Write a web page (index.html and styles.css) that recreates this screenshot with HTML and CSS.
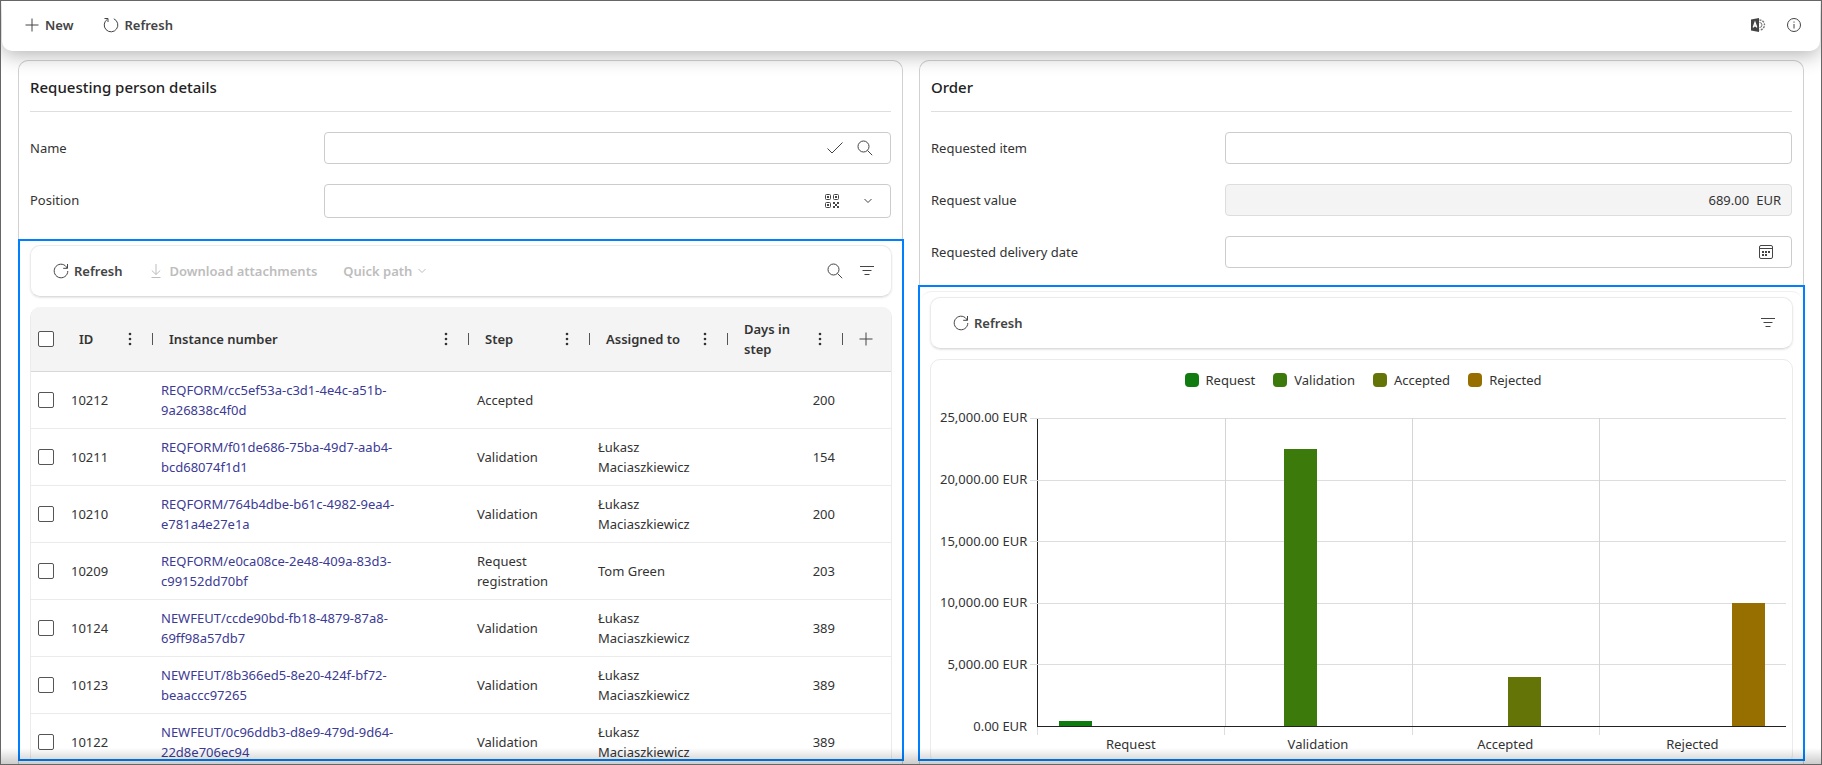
FILE: index.html
```html
<!DOCTYPE html>
<html lang="en">
<head>
    <meta charset="UTF-8">
    <meta name="viewport" content="width=device-width, initial-scale=1.0">
    <title>Request form</title>
    <link rel="stylesheet" href="styles.css">
</head>
<body>
    <svg class="sprite" aria-hidden="true">
        <symbol id="i-plus" viewBox="0 0 16 16"><path d="M8 1.5v13M1.5 8h13"/></symbol>
        <symbol id="i-reload" viewBox="0 0 16 16"><path d="M4.500 2.200A6.800 6.800 0 1 0 10.800 1.800M1.500 1.500h3.500v3.500"/></symbol>
        <symbol id="i-refresh" viewBox="0 0 16 16"><path d="M14.200 5.200A6.800 6.800 0 1 0 14.800 8M14.500 1v4.300h-4.300"/></symbol>
        <symbol id="i-download" viewBox="0 0 16 16"><path d="M8 1v10.500M3.800 7.500L8 11.500l4.200-4M3.500 14.500h9"/></symbol>
        <symbol id="i-chevron" viewBox="0 0 10 10"><path d="M1.500 3L5 6.500 8.500 3"/></symbol>
        <symbol id="i-search" viewBox="0 0 16 16"><circle cx="6.500" cy="6.500" r="5.500"/><path d="M10.500 10.500l4.700 4.700"/></symbol>
        <symbol id="i-filter" viewBox="0 0 16 16"><path d="M1 3.500h14M3.500 7.500h9M5.500 11.500h5"/></symbol>
        <symbol id="i-check" viewBox="0 0 18 16"><path d="M1.500 8.500l4.500 4.500L16.500 2.500"/></symbol>
        <symbol id="i-info" viewBox="0 0 16 16"><circle cx="8" cy="8" r="6.500"/><path d="M8 7v4.500M8 4.500v1.200"/></symbol>
        <symbol id="i-dots" viewBox="0 0 16 16"><g fill="#333" stroke="none"><circle cx="8" cy="3" r="1.300"/><circle cx="8" cy="8" r="1.300"/><circle cx="8" cy="13" r="1.300"/></g></symbol>
        <symbol id="i-calendar" viewBox="0 0 16 16"><rect x="1.500" y="1.500" width="13" height="13" rx="1.500"/><path d="M1.500 4.500h13"/><path stroke-width="2" stroke-dasharray="2 1" d="M4 8h8M4 11h5"/></symbol>
        <symbol id="i-qr" viewBox="0 0 16 16"><rect x="1.500" y="1.500" width="5" height="5" rx="1"/><rect x="9.500" y="1.500" width="5" height="5" rx="1"/><rect x="1.500" y="9.500" width="5" height="5" rx="1"/><path stroke-width="2" d="M3 4h2M11 4h2M3 12h2M9 10h2M13 10h2M11 12h2M9 14h2M13 14h2"/></symbol>
        <symbol id="i-admin" viewBox="0 0 16 16"><path fill="#444" stroke="none" d="M1 2.500L9 1v14l-8-1.500z"/><path stroke="#fff" stroke-width="1.300" d="M3.200 10.500L5 5.500l1.800 5M3.800 9h2.400"/><path stroke="#777" stroke-width="1.400" stroke-dasharray="2 1" d="M9.500 3a5 5 0 0 1 0 10"/><path stroke="#777" d="M9.500 5.500a2.500 2.500 0 0 1 0 5"/></symbol>
    </svg>

    <div class="frame">
        <header class="topbar">
            <button class="tool"><svg class="icon"><use href="#i-plus"/></svg>New</button>
            <button class="tool"><svg class="icon"><use href="#i-reload"/></svg>Refresh</button>
            <span class="spacer"></span>
            <button class="tool" aria-label="Admin tools"><svg class="icon"><use href="#i-admin"/></svg></button>
            <button class="tool" aria-label="Information"><svg class="icon"><use href="#i-info"/></svg></button>
        </header>

        <main class="columns">
            <section class="card">
                <h2>Requesting person details</h2>
                <div class="field">
                    <label for="name">Name</label>
                    <div class="control">
                        <input id="name" type="text">
                        <button aria-label="Verify"><svg class="icon wide"><use href="#i-check"/></svg></button>
                        <button aria-label="Search"><svg class="icon"><use href="#i-search"/></svg></button>
                    </div>
                </div>
                <div class="field">
                    <label for="position">Position</label>
                    <div class="control tall">
                        <input id="position" type="text">
                        <button aria-label="Scan code"><svg class="icon"><use href="#i-qr"/></svg></button>
                        <button class="expand" aria-label="Expand"><svg class="icon small"><use href="#i-chevron"/></svg></button>
                    </div>
                </div>

                <div class="highlight report">
                    <div class="toolbar">
                        <button class="tool"><svg class="icon"><use href="#i-refresh"/></svg>Refresh</button>
                        <button class="tool" disabled><svg class="icon"><use href="#i-download"/></svg>Download attachments</button>
                        <button class="tool" disabled>Quick path<svg class="icon small"><use href="#i-chevron"/></svg></button>
                        <span class="spacer"></span>
                        <button class="tool" aria-label="Search"><svg class="icon"><use href="#i-search"/></svg></button>
                        <button class="tool" aria-label="Filter"><svg class="icon"><use href="#i-filter"/></svg></button>
                    </div>
                    <div class="grid">
                        <table>
                            <colgroup>
                                <col class="c-check"><col class="c-id"><col><col class="c-step"><col class="c-assigned"><col class="c-days"><col class="c-add">
                            </colgroup>
                            <thead>
                                <tr>
                                    <th class="check"><input type="checkbox" aria-label="Select all"></th>
                                    <th><div class="head"><span>ID</span><button aria-label="ID menu"><svg class="icon"><use href="#i-dots"/></svg></button></div></th>
                                    <th><div class="head"><span>Instance number</span><button aria-label="Instance number menu"><svg class="icon"><use href="#i-dots"/></svg></button></div></th>
                                    <th><div class="head"><span>Step</span><button aria-label="Step menu"><svg class="icon"><use href="#i-dots"/></svg></button></div></th>
                                    <th><div class="head"><span>Assigned to</span><button aria-label="Assigned to menu"><svg class="icon"><use href="#i-dots"/></svg></button></div></th>
                                    <th><div class="head"><span>Days in step</span><button aria-label="Days in step menu"><svg class="icon"><use href="#i-dots"/></svg></button></div></th>
                                    <th class="add"><button aria-label="Add column"><svg class="icon"><use href="#i-plus"/></svg></button></th>
                                </tr>
                            </thead>
                            <tbody>
                                <tr>
                                    <td class="check"><input type="checkbox" aria-label="Select 10212"></td>
                                    <td>10212</td>
                                    <td><a href="#">REQFORM/cc5ef53a-c3d1-4e4c-a51b-9a26838c4f0d</a></td>
                                    <td>Accepted</td>
                                    <td></td>
                                    <td class="num">200</td>
                                    <td></td>
                                </tr>
                                <tr>
                                    <td class="check"><input type="checkbox" aria-label="Select 10211"></td>
                                    <td>10211</td>
                                    <td><a href="#">REQFORM/f01de686-75ba-49d7-aab4-bcd68074f1d1</a></td>
                                    <td>Validation</td>
                                    <td>Łukasz Maciaszkiewicz</td>
                                    <td class="num">154</td>
                                    <td></td>
                                </tr>
                                <tr>
                                    <td class="check"><input type="checkbox" aria-label="Select 10210"></td>
                                    <td>10210</td>
                                    <td><a href="#">REQFORM/764b4dbe-b61c-4982-9ea4-e781a4e27e1a</a></td>
                                    <td>Validation</td>
                                    <td>Łukasz Maciaszkiewicz</td>
                                    <td class="num">200</td>
                                    <td></td>
                                </tr>
                                <tr>
                                    <td class="check"><input type="checkbox" aria-label="Select 10209"></td>
                                    <td>10209</td>
                                    <td><a href="#">REQFORM/e0ca08ce-2e48-409a-83d3-c99152dd70bf</a></td>
                                    <td>Request registration</td>
                                    <td>Tom Green</td>
                                    <td class="num">203</td>
                                    <td></td>
                                </tr>
                                <tr>
                                    <td class="check"><input type="checkbox" aria-label="Select 10124"></td>
                                    <td>10124</td>
                                    <td><a href="#">NEWFEUT/ccde90bd-fb18-4879-87a8-69ff98a57db7</a></td>
                                    <td>Validation</td>
                                    <td>Łukasz Maciaszkiewicz</td>
                                    <td class="num">389</td>
                                    <td></td>
                                </tr>
                                <tr>
                                    <td class="check"><input type="checkbox" aria-label="Select 10123"></td>
                                    <td>10123</td>
                                    <td><a href="#">NEWFEUT/8b366ed5-8e20-424f-bf72-beaaccc97265</a></td>
                                    <td>Validation</td>
                                    <td>Łukasz Maciaszkiewicz</td>
                                    <td class="num">389</td>
                                    <td></td>
                                </tr>
                                <tr>
                                    <td class="check"><input type="checkbox" aria-label="Select 10122"></td>
                                    <td>10122</td>
                                    <td><a href="#">NEWFEUT/0c96ddb3-d8e9-479d-9d64-22d8e706ec94</a></td>
                                    <td>Validation</td>
                                    <td>Łukasz Maciaszkiewicz</td>
                                    <td class="num">389</td>
                                    <td></td>
                                </tr>
                            </tbody>
                        </table>
                    </div>
                </div>
            </section>

            <section class="card">
                <h2>Order</h2>
                <div class="field">
                    <label for="item">Requested item</label>
                    <div class="control"><input id="item" type="text"></div>
                </div>
                <div class="field">
                    <label for="value">Request value</label>
                    <div class="control readonly">
                        <input id="value" type="text" value="689.00" readonly>
                        <span class="unit">EUR</span>
                    </div>
                </div>
                <div class="field">
                    <label for="delivery">Requested delivery date</label>
                    <div class="control">
                        <input id="delivery" type="text">
                        <button aria-label="Pick a date"><svg class="icon"><use href="#i-calendar"/></svg></button>
                    </div>
                </div>

                <div class="highlight summary">
                    <div class="inner">
                        <div class="toolbar">
                            <button class="tool"><svg class="icon"><use href="#i-refresh"/></svg>Refresh</button>
                            <span class="spacer"></span>
                            <button class="tool" aria-label="Filter"><svg class="icon"><use href="#i-filter"/></svg></button>
                        </div>
                        <div class="chart">
                            <ul class="legend">
                                <li class="request">Request</li>
                                <li class="validation">Validation</li>
                                <li class="accepted">Accepted</li>
                                <li class="rejected">Rejected</li>
                            </ul>
                            <div class="scale">
                                <span>25,000.00 EUR</span>
                                <span>20,000.00 EUR</span>
                                <span>15,000.00 EUR</span>
                                <span>10,000.00 EUR</span>
                                <span>5,000.00 EUR</span>
                                <span>0.00 EUR</span>
                            </div>
                            <div class="plot">
                                <div class="lines"><i></i><i></i><i></i><i></i><i></i></div>
                                <div class="category"><div class="bar request" style="height: 1.7%"></div></div>
                                <div class="category"><div class="bar validation" style="height: 90%"></div></div>
                                <div class="category"><div class="bar accepted" style="height: 16%"></div></div>
                                <div class="category"><div class="bar rejected" style="height: 40%"></div></div>
                            </div>
                            <div class="names">
                                <span>Request</span>
                                <span>Validation</span>
                                <span>Accepted</span>
                                <span>Rejected</span>
                            </div>
                        </div>
                    </div>
                </div>
            </section>
        </main>
    </div>
</body>
</html>
```

FILE: styles.css
```css
:root {
    --text: #333;
    --muted: #bdbdbd;
    --line: #d1d1d1;
    --soft-line: #ebebeb;
    --blue: #0080ff;
    --link: #3b3a94;
}

* {
    box-sizing: border-box;
}

body {
    margin: 0;
    font-family: "Noto Sans", "Open Sans", sans-serif;
    font-size: 13px;
    line-height: 20px;
    color: var(--text);
    background: #fff;
}

button,
input {
    font: inherit;
    color: inherit;
    border: none;
    background: none;
    padding: 0;
    margin: 0;
}

button {
    display: flex;
    align-items: center;
    cursor: pointer;
}

.sprite {
    display: none;
}

.icon {
    width: 16px;
    height: 16px;
    flex: none;
    fill: none;
    stroke: #444;
    stroke-width: 1;
}

.icon.small {
    width: 10px;
    height: 10px;
}

.icon.wide {
    width: 18px;
}

.spacer {
    flex: 1;
}

.frame {
    position: relative;
    display: flex;
    flex-direction: column;
    height: 100vh;
    border: 1px solid #666;
    overflow: hidden;
}

/* fade at the bottom of the scrolled form */
.frame::after {
    content: '';
    position: absolute;
    left: 0;
    right: 0;
    bottom: 0;
    height: 16px;
    background: linear-gradient(rgba(0, 0, 0, 0), rgba(0, 0, 0, 0.2));
    pointer-events: none;
}

.topbar {
    position: relative;
    z-index: 1;
    display: flex;
    align-items: center;
    gap: 30px;
    height: 50px;
    flex: none;
    margin: 0 1px;
    padding: 0 18px 2px 22px;
    border-radius: 0 0 10px 10px;
    background: #fff;
    box-shadow: 0 4px 20px rgba(0, 0, 0, 0.3);
}

.topbar .spacer + .tool {
    margin-right: -10px;
}

.tool {
    gap: 5px;
    font-weight: 600;
    color: #444;
    white-space: nowrap;
}

.tool:disabled {
    color: var(--muted);
    cursor: default;
}

.tool:disabled .icon {
    stroke: var(--muted);
}

.columns {
    flex: 1;
    min-height: 0;
    display: grid;
    grid-template-columns: repeat(2, minmax(0, 1fr));
    gap: 16px;
    padding: 9px 17px 0;
}

.card {
    display: flex;
    flex-direction: column;
    min-height: 0;
    padding: 0 11px 3px;
    border: 1px solid var(--line);
    border-bottom: none;
    border-radius: 10px 10px 0 0;
}

h2 {
    margin: 0 0 20px;
    padding: 16px 0 14px;
    border-bottom: 1px solid #dedede;
    font-size: 15px;
    font-weight: 500;
    line-height: 20px;
    color: #222;
}

.field {
    display: grid;
    grid-template-columns: 34% 1fr;
    column-gap: 1px;
    align-items: center;
    flex: none;
    height: 32px;
    margin-bottom: 20px;
}

.control {
    display: flex;
    align-items: center;
    gap: 13px;
    height: 32px;
    padding: 0 17px 0 10px;
    border: 1px solid #ccc;
    border-radius: 4px;
    background: #fff;
}

.control.tall {
    height: 34px;
    margin-bottom: -2px;
}

.control input {
    flex: 1;
    min-width: 0;
    outline: none;
}

.control .expand {
    margin-left: 10px;
}

.control.readonly {
    gap: 7px;
    padding: 0 10px;
    background: #f4f4f4;
    border-color: #ddd;
}

.control.readonly input {
    text-align: right;
}

.highlight {
    flex: 1;
    min-height: 0;
    border: 2px solid var(--blue);
    overflow: hidden;
}

.report {
    margin: 3px -13px 0 -12px;
    padding: 4px 10px 0;
}

.summary {
    margin: -3px -13px 0;
    padding: 4px 1px 0;
}

.inner {
    padding: 5px 9px;
    border-top: 1px solid #f0f0f0;
    border-radius: 10px 10px 0 0;
}

.toolbar {
    display: flex;
    align-items: center;
    gap: 26px;
    height: 52px;
    margin-bottom: 10px;
    padding: 0 16px 0 22px;
    border: 1px solid var(--soft-line);
    border-bottom-color: #ddd;
    border-radius: 10px;
    box-shadow: 0 1px 2px rgba(0, 0, 0, 0.1);
}

.toolbar .spacer + .tool:not(:last-child) {
    margin-right: -10px;
}

.grid {
    border: 1px solid var(--soft-line);
    border-top: none;
    border-radius: 10px 10px 0 0;
    overflow: hidden;
}

table {
    width: 100%;
    table-layout: fixed;
    border-collapse: separate;
    border-spacing: 0;
}

.c-check { width: 32px; }
.c-id { width: 90px; }
.c-step { width: 121px; }
.c-assigned { width: 138px; }
.c-days { width: 115px; }
.c-add { width: 48px; }

th {
    height: 65px;
    padding: 0;
    background: #f4f4f4;
    border-bottom: 1px solid #d8d8d8;
    font-weight: 600;
    text-align: left;
}

td {
    height: 57px;
    padding: 8px;
    border-bottom: 1px solid var(--soft-line);
}

.head {
    display: flex;
    align-items: center;
    justify-content: space-between;
    padding: 0 15px 0 16px;
    background: linear-gradient(#555, #555) right center / 1px 12px no-repeat;
}

.head span {
    flex: 1;
}

.add button {
    margin-left: 15px;
}

.check {
    padding: 0 0 0 7px;
}

.check input {
    appearance: none;
    display: block;
    width: 16px;
    height: 16px;
    border: 1px solid #555;
    border-radius: 2px;
    background: #fff;
}

.num {
    text-align: right;
}

a {
    color: var(--link);
    text-decoration: none;
}

.request { --series: #107c10; }
.validation { --series: #3c7a0c; }
.accepted { --series: #657406; }
.rejected { --series: #966f00; }

.chart {
    display: grid;
    grid-template-columns: auto minmax(0, 1fr);
    column-gap: 10px;
    padding: 10px 6px 10px 9px;
    border: 1px solid var(--soft-line);
    border-radius: 10px;
}

.legend {
    grid-column: 1 / -1;
    display: flex;
    justify-content: center;
    gap: 18px;
    margin: 0 0 28px;
    padding: 0;
    list-style: none;
}

.legend li {
    display: flex;
    align-items: center;
    gap: 7px;
}

.legend li::before {
    content: '';
    width: 14px;
    height: 14px;
    border-radius: 4px;
    background: var(--series);
}

.scale {
    display: flex;
    flex-direction: column;
    justify-content: space-between;
    margin: -11px 0 -9px;
    text-align: right;
}

.plot {
    position: relative;
    display: grid;
    grid-template-columns: repeat(4, 1fr);
    height: 309px;
    border-left: 1px solid #222;
    border-bottom: 1px solid #222;
}

.lines {
    position: absolute;
    inset: 0 0 0 -8px;
    display: flex;
    flex-direction: column;
}

.lines i {
    flex: 1;
    border-top: 1px solid #ddd;
}

.category {
    position: relative;
    display: grid;
    grid-template-columns: repeat(4, 1fr);
    align-items: end;
    padding: 0 10%;
}

.category + .category {
    border-left: 1px solid #d5d5d5;
}

.bar {
    width: 90%;
    margin: 0 auto;
    background: var(--series);
}

.bar.validation { grid-column: 2; }
.bar.accepted { grid-column: 3; }
.bar.rejected { grid-column: 4; }

.names {
    grid-column: 2;
    display: grid;
    grid-template-columns: repeat(4, 1fr);
    text-align: center;
}

.names span {
    padding-top: 7px;
    background: linear-gradient(#ddd, #ddd) left top / 1px 8px no-repeat;
}
```
